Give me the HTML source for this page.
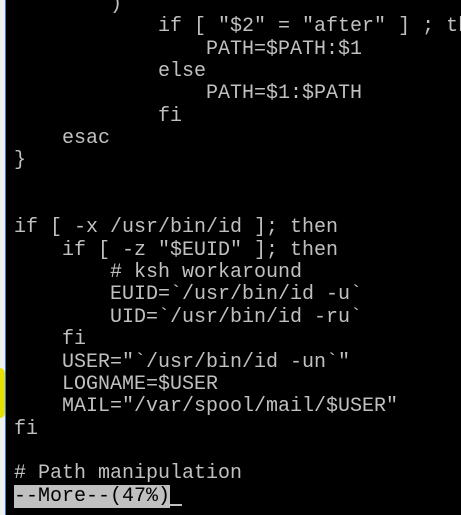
<!DOCTYPE html><html><head><style>
body{margin:0;width:461px;height:515px;background:#000;overflow:hidden;position:relative}
#l{position:absolute;left:0;top:0;width:5px;height:515px;background:#f0f0f0;border-right:1px solid #3a7bd5}
#y{position:absolute;left:0;top:368px;width:5px;height:50px;background:#e8e000;border-radius:0 6px 6px 0}
pre{position:absolute;left:14px;top:-6px;width:447px;overflow:hidden;margin:0;font:20px/22.35px "Liberation Mono",monospace;color:#c0c0c0}
.m{background:#c0c0c0;color:#000}
.c{display:inline-block;width:12px;border-bottom:2px solid #c0c0c0;height:18px;vertical-align:top}
</style></head><body><div id="l"></div><div id="y"></div><pre>        )
            if [ "$2" = "after" ] ; then
                PATH=$PATH:$1
            else
                PATH=$1:$PATH
            fi
    esac
}


if [ -x /usr/bin/id ]; then
    if [ -z "$EUID" ]; then
        # ksh workaround
        EUID=`/usr/bin/id -u`
        UID=`/usr/bin/id -ru`
    fi
    USER="`/usr/bin/id -un`"
    LOGNAME=$USER
    MAIL="/var/spool/mail/$USER"
fi

# Path manipulation
<span class="m">--More--(47%)</span><span class="c"></span></pre></body></html>
